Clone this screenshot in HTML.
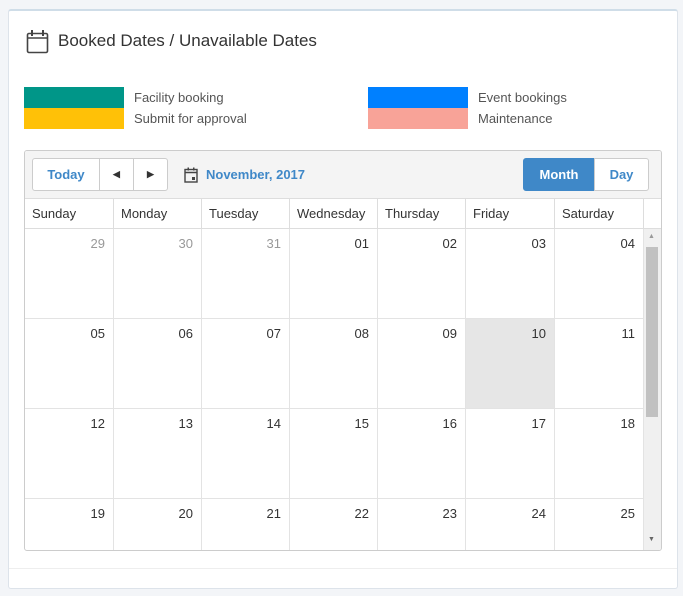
<!DOCTYPE html>
<html><head><style>
*{box-sizing:border-box;margin:0;padding:0}
body{width:683px;height:596px;background:#f3f5f8;font-family:"Liberation Sans",sans-serif;position:relative;overflow:hidden;color:#333}
.card{position:absolute;left:8px;top:9px;width:670px;height:580px;background:#fff;border:1px solid #dde3ea;border-top:2px solid #cfdde8;border-radius:3px}
.abs{position:absolute}
.title{left:58px;top:31px;font-size:17px;color:#333}
.lg{font-size:13px;color:#555}
.cal{left:24px;top:150px;width:638px;height:401px;border:1px solid #ccc;border-radius:3px;overflow:hidden;background:#fff}
.tb{left:0;top:0;width:636px;height:48px;background:#f4f4f4;border-bottom:1px solid #ddd}
.btn{position:absolute;top:7px;height:33px;border:1px solid #ccc;background:#fff;color:#3f88c8;font-weight:bold;font-size:13px;display:flex;align-items:center;justify-content:center}
.hd{top:48px;height:30px;font-size:13px;padding:7px 0 0 7px;border-right:1px solid #ddd;border-bottom:1px solid #ddd}
.c{height:90px;border-right:1px solid #e3e3e3;border-bottom:1px solid #e3e3e3;font-size:13px;text-align:right;padding:7px 8px 0 0}
.g{color:#999}
</style></head><body>
<div class="card"></div>
<svg class="abs" style="left:26px;top:29px" width="24" height="25" viewBox="0 0 24 25"><rect x="1.5" y="4.5" width="20" height="19" rx="1.5" fill="none" stroke="#444" stroke-width="1.6"/><line x1="1.5" y1="9" x2="21.5" y2="9" stroke="#444" stroke-width="1.6"/><rect x="5" y="1" width="2" height="6" fill="#444"/><rect x="16" y="1" width="2" height="6" fill="#444"/></svg>
<div class="abs title">Booked Dates / Unavailable Dates</div>
<div class="abs" style="left:24px;top:87px;width:100px;height:21px;background:#009688"></div>
<div class="abs" style="left:24px;top:108px;width:100px;height:21px;background:#ffc107"></div>
<div class="abs" style="left:368px;top:87px;width:100px;height:21px;background:#0080ff"></div>
<div class="abs" style="left:368px;top:108px;width:100px;height:21px;background:#f8a398"></div>
<div class="abs lg" style="left:134px;top:90px">Facility booking</div>
<div class="abs lg" style="left:134px;top:111px">Submit for approval</div>
<div class="abs lg" style="left:478px;top:90px">Event bookings</div>
<div class="abs lg" style="left:478px;top:111px">Maintenance</div>
<div class="abs cal">
<div class="abs tb"></div>
<div class="btn" style="left:7px;width:68px;border-radius:3px 0 0 3px">Today</div>
<div class="btn" style="left:74px;width:35px;color:#333;font-size:9px">◀</div>
<div class="btn" style="left:108px;width:35px;color:#333;font-size:9px;border-radius:0 3px 3px 0">▶</div>
<svg class="abs" style="left:159px;top:16px" width="14" height="16" viewBox="0 0 14 16"><rect x="1" y="2.5" width="12" height="12.5" fill="none" stroke="#444" stroke-width="1.4"/><line x1="1" y1="5.5" x2="13" y2="5.5" stroke="#444" stroke-width="1.4"/><rect x="3.5" y="0.5" width="1.5" height="3" fill="#444"/><rect x="9" y="0.5" width="1.5" height="3" fill="#444"/><rect x="8" y="10" width="3" height="3" fill="#444"/></svg>
<div class="abs" style="left:181px;top:16px;font-size:13px;font-weight:bold;color:#3f88c8">November, 2017</div>
<div class="btn" style="left:498px;width:72px;background:#3f88c8;border-color:#3f88c8;color:#fff;border-radius:3px 0 0 3px">Month</div>
<div class="btn" style="left:569px;width:55px;border-radius:0 3px 3px 0">Day</div>
<div class="abs" style="left:0;top:48px;width:636px;display:flex">
<div class="hd" style="position:relative;top:0;width:89px">Sunday</div><div class="hd" style="position:relative;top:0;width:88px">Monday</div><div class="hd" style="position:relative;top:0;width:88px">Tuesday</div><div class="hd" style="position:relative;top:0;width:88px">Wednesday</div><div class="hd" style="position:relative;top:0;width:88px">Thursday</div><div class="hd" style="position:relative;top:0;width:89px">Friday</div><div class="hd" style="position:relative;top:0;width:89px">Saturday</div><div class="hd" style="position:relative;top:0;width:17px;border-right:0"></div>
</div>
<div class="abs" style="left:0;top:78px;width:619px;display:grid;grid-template-columns:89px 88px 88px 88px 88px 89px 89px">
<div class="c g">29</div><div class="c g">30</div><div class="c g">31</div><div class="c">01</div><div class="c">02</div><div class="c">03</div><div class="c">04</div>
<div class="c">05</div><div class="c">06</div><div class="c">07</div><div class="c">08</div><div class="c">09</div><div class="c" style="background:#e6e6e6">10</div><div class="c">11</div>
<div class="c">12</div><div class="c">13</div><div class="c">14</div><div class="c">15</div><div class="c">16</div><div class="c">17</div><div class="c">18</div>
<div class="c">19</div><div class="c">20</div><div class="c">21</div><div class="c">22</div><div class="c">23</div><div class="c">24</div><div class="c">25</div>
</div>
<div class="abs" style="left:619px;top:78px;width:17px;height:322px;background:#f0f0f0"></div>
<div class="abs" style="left:621px;top:96px;width:12px;height:170px;background:#c1c1c1"></div>
<div class="abs" style="left:623px;top:82px;font-size:7px;color:#999">▲</div>
<div class="abs" style="left:623px;top:385px;font-size:7px;color:#666">▼</div>
</div>
<div class="abs" style="left:9px;top:568px;width:668px;height:1px;background:#eee"></div>
</body></html>
